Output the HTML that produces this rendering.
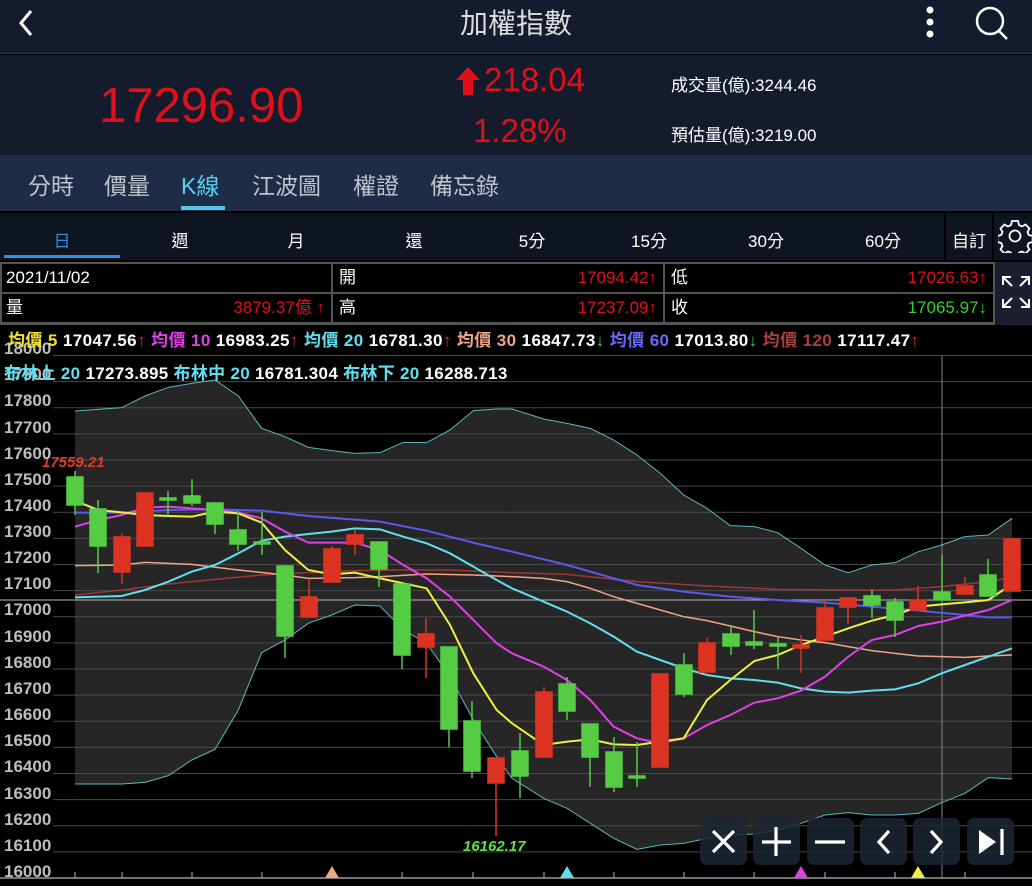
<!DOCTYPE html>
<html><head><meta charset="utf-8">
<style>
*{margin:0;padding:0;box-sizing:border-box}
body{width:1032px;height:886px;background:#000;position:relative;overflow:hidden;font-family:"Liberation Sans","Noto Sans CJK TC",sans-serif;color:#fff}
.a{position:absolute;white-space:nowrap}
#top{position:absolute;left:0;top:0;width:1032px;height:54px;background:#131b2c;border-bottom:1px solid #2a3448}
#quote{position:absolute;left:0;top:55px;width:1032px;height:100px;background:#131b2c}
#tabs{position:absolute;left:0;top:155px;width:1032px;height:56px;background:#1f2c47}
#per{position:absolute;left:0;top:211px;width:1032px;height:51px;background:#0f1520;border-top:2px solid #000;border-bottom:2px solid #000}
.tab{font-size:23px;color:#c0c4cc;top:167px}
.p{font-size:17px;top:227px;transform:translateX(-50%)}
.cell{position:absolute;background:#000;height:28px;font-size:17px;line-height:28px}
.lg{font-size:17px;font-weight:bold;top:326px}
.btn{position:absolute;top:818px;width:47px;height:47px;border-radius:7px;background:rgba(28,38,52,0.85)}
.yl{position:absolute;left:4px;font-size:17px;font-weight:bold;color:#bdbdbd}
</style></head><body>

<svg class="a" style="left:0;top:0" width="1032" height="886" viewBox="0 0 1032 886">
 <g transform="translate(0,380) scale(0.33333)">
  <polygon fill="#262626" points="225,93 365,83 435,48 505,22 575,10 645,0 715,48 785,145 855,170 925,202 995,212 1065,220 1140,218 1210,187 1280,188 1350,150 1420,92 1490,87 1536,87 1536,1195 1490,1130 1420,1020 1350,890 1280,790 1210,750 1140,678 1065,675 995,705 925,730 855,780 785,818 715,990 645,1108 575,1140 505,1187 435,1207 365,1212 225,1212"/>
 </g>
 <g transform="translate(512,380) scale(0.33333)">
  <polygon fill="#262626" points="0,87 95,117 165,130 235,145 305,180 375,225 445,280 515,345 585,385 655,437 727,440 797,458 867,505 939,555 1009,578 1079,555 1149,548 1219,515 1289,495 1359,470 1429,465 1500,415 1500,1197 1429,1193 1359,1240 1289,1268 1219,1300 1149,1305 1079,1305 1009,1298 939,1305 867,1330 797,1350 727,1362 655,1365 585,1375 515,1390 445,1395 375,1408 305,1375 235,1330 165,1285 95,1255 0,1195"/>
 </g>
 <g stroke="#4a4a4a" stroke-width="1">
  <line x1="53" x2="1032" y1="355.5" y2="355.5"/><line x1="53" x2="1032" y1="381.6" y2="381.6"/><line x1="53" x2="1032" y1="407.7" y2="407.7"/><line x1="53" x2="1032" y1="433.9" y2="433.9"/><line x1="53" x2="1032" y1="460" y2="460"/><line x1="53" x2="1032" y1="486.1" y2="486.1"/><line x1="53" x2="1032" y1="512.2" y2="512.2"/><line x1="53" x2="1032" y1="538.4" y2="538.4"/><line x1="53" x2="1032" y1="564.5" y2="564.5"/><line x1="53" x2="1032" y1="590.6" y2="590.6"/><line x1="53" x2="1032" y1="616.7" y2="616.7"/><line x1="53" x2="1032" y1="642.9" y2="642.9"/><line x1="53" x2="1032" y1="669" y2="669"/><line x1="53" x2="1032" y1="695.1" y2="695.1"/><line x1="53" x2="1032" y1="721.2" y2="721.2"/><line x1="53" x2="1032" y1="747.4" y2="747.4"/><line x1="53" x2="1032" y1="773.5" y2="773.5"/><line x1="53" x2="1032" y1="799.6" y2="799.6"/><line x1="53" x2="1032" y1="825.7" y2="825.7"/><line x1="53" x2="1032" y1="851.9" y2="851.9"/>
 </g>
 <line x1="0" x2="1032" y1="878" y2="878" stroke="#999" stroke-width="1.5"/>
 <g stroke="#999" stroke-width="1.2">
  <line x1="75" x2="75" y1="872" y2="878"/><line x1="122" x2="122" y1="872" y2="878"/><line x1="192" x2="192" y1="872" y2="878"/><line x1="262" x2="262" y1="872" y2="878"/><line x1="402" x2="402" y1="872" y2="878"/><line x1="473" x2="473" y1="872" y2="878"/><line x1="544" x2="544" y1="872" y2="878"/><line x1="614" x2="614" y1="872" y2="878"/><line x1="684" x2="684" y1="872" y2="878"/><line x1="754" x2="754" y1="872" y2="878"/><line x1="825" x2="825" y1="872" y2="878"/><line x1="895" x2="895" y1="872" y2="878"/><line x1="965" x2="965" y1="872" y2="878"/>
 </g>
 <line x1="0" x2="1032" y1="600" y2="600" stroke="#bbb" stroke-width="1"/>
 <line x1="942" x2="942" y1="356" y2="878" stroke="#888" stroke-width="1"/>
 <g fill="none" transform="translate(0,380) scale(0.33333)">
  <polyline vector-effect="non-scaling-stroke" stroke="#5ab8c0" stroke-width="1" points="225,93 365,83 435,48 505,22 575,10 645,0 715,48 785,145 855,170 925,202 995,212 1065,220 1140,218 1210,187 1280,188 1350,150 1420,92 1490,87 1536,87"/>
  <polyline vector-effect="non-scaling-stroke" stroke="#5ab8c0" stroke-width="1" points="225,1212 365,1212 435,1207 505,1187 575,1140 645,1108 715,990 785,818 855,780 925,730 995,705 1065,675 1140,678 1210,750 1280,790 1350,890 1420,1020 1490,1130 1536,1195"/>
  <polyline vector-effect="non-scaling-stroke" stroke="#a03535" stroke-width="1.5" points="225,645 365,630 505,612 645,598 785,585 925,578 1065,572 1210,570 1350,570 1536,578"/>
  <polyline vector-effect="non-scaling-stroke" stroke="#f0a585" stroke-width="1.5" points="225,557 365,555 435,547 575,553 715,570 855,585 925,595 1065,593 1140,590 1280,582 1420,585 1536,590"/>
  <polyline vector-effect="non-scaling-stroke" stroke="#5a5af0" stroke-width="2" points="225,398 365,398 505,390 645,388 785,392 925,408 1140,425 1280,452 1420,488 1536,515"/>
  <polyline vector-effect="non-scaling-stroke" stroke="#60e0ee" stroke-width="2" points="225,652 365,648 435,630 505,605 575,575 645,555 715,520 785,482 855,470 925,462 995,455 1065,445 1140,448 1210,470 1280,490 1350,520 1420,560 1490,600 1536,625"/>
  <polyline vector-effect="non-scaling-stroke" stroke="#e040e8" stroke-width="2" points="225,440 295,420 365,405 435,383 505,380 575,385 645,390 715,398 785,415 855,455 925,488 995,488 1065,488 1140,510 1210,555 1280,595 1350,650 1420,720 1490,790 1536,820"/>
  <polyline vector-effect="non-scaling-stroke" stroke="#f0f040" stroke-width="2" points="225,362 295,390 365,397 435,405 505,408 575,410 645,395 715,400 785,428 855,510 925,570 995,583 1065,578 1140,595 1210,610 1280,625 1350,735 1420,880 1490,990 1536,1030"/>
 </g>
 <g fill="none" transform="translate(512,380) scale(0.33333)">
  <polyline vector-effect="non-scaling-stroke" stroke="#5ab8c0" stroke-width="1" points="0,87 95,117 165,130 235,145 305,180 375,225 445,280 515,345 585,385 655,437 727,440 797,458 867,505 939,555 1009,578 1079,555 1149,548 1219,515 1289,495 1359,470 1429,465 1500,415"/>
  <polyline vector-effect="non-scaling-stroke" stroke="#5ab8c0" stroke-width="1" points="0,1195 95,1255 165,1285 235,1330 305,1375 375,1408 445,1395 515,1390 585,1375 655,1365 727,1362 797,1350 867,1330 939,1305 1009,1298 1079,1305 1149,1305 1219,1300 1289,1268 1359,1240 1429,1193 1500,1197"/>
  <polyline vector-effect="non-scaling-stroke" stroke="#a03535" stroke-width="1.5" points="0,578 165,583 375,605 585,618 797,628 1009,630 1149,630 1289,620 1429,605 1500,592"/>
  <polyline vector-effect="non-scaling-stroke" stroke="#f0a585" stroke-width="1.5" points="0,590 95,595 165,605 235,625 305,650 375,670 445,690 515,710 585,722 655,738 727,755 797,770 867,780 939,788 1009,800 1079,812 1149,820 1219,828 1289,830 1359,832 1429,828 1500,825"/>
  <polyline vector-effect="non-scaling-stroke" stroke="#5a5af0" stroke-width="2" points="0,515 165,555 305,595 375,615 515,635 655,650 797,660 939,668 1079,680 1219,692 1359,705 1429,712 1500,712"/>
  <polyline vector-effect="non-scaling-stroke" stroke="#60e0ee" stroke-width="2" points="0,625 95,665 165,695 235,730 305,770 375,815 445,840 515,865 585,885 655,895 727,900 797,908 867,925 939,935 1009,938 1079,932 1149,928 1219,910 1289,880 1359,855 1429,830 1500,805"/>
  <polyline vector-effect="non-scaling-stroke" stroke="#e040e8" stroke-width="2" points="0,820 95,860 165,900 235,960 305,1040 375,1075 445,1090 515,1075 585,1035 655,1005 727,968 797,955 867,932 939,890 1009,830 1079,780 1149,765 1219,738 1289,725 1359,707 1429,690 1500,660"/>
  <polyline vector-effect="non-scaling-stroke" stroke="#f0f040" stroke-width="2" points="0,1030 95,1095 165,1085 235,1078 305,1093 375,1095 445,1085 515,1075 585,960 655,900 727,843 797,825 867,795 939,770 1009,745 1079,722 1149,705 1219,680 1289,673 1359,667 1429,660 1500,612"/>
 </g>
 <g stroke="#55cc44" stroke-width="1.5" fill="#55cc44">
  <line x1="75" x2="75" y1="471" y2="515"/><rect x="67" y="477" width="16" height="28"/>
  <line x1="98" x2="98" y1="500" y2="573"/><rect x="90" y="509" width="16" height="37"/>
  <line x1="168" x2="168" y1="491" y2="516"/><rect x="160" y="498" width="16" height="2"/>
  <line x1="192" x2="192" y1="479" y2="506"/><rect x="184" y="496" width="16" height="7"/>
  <line x1="215" x2="215" y1="502" y2="534"/><rect x="207" y="503" width="16" height="21"/>
  <line x1="238" x2="238" y1="511" y2="551"/><rect x="230" y="530" width="16" height="14"/>
  <line x1="262" x2="262" y1="512" y2="555"/><rect x="254" y="542" width="16" height="2"/>
  <line x1="285" x2="285" y1="566" y2="658"/><rect x="277" y="566" width="16" height="70"/>
  <line x1="379" x2="379" y1="542" y2="587"/><rect x="371" y="542" width="16" height="27"/>
  <line x1="402" x2="402" y1="584" y2="669"/><rect x="394" y="584" width="16" height="71"/>
  <line x1="449" x2="449" y1="647" y2="747"/><rect x="441" y="647" width="16" height="82"/>
  <line x1="472" x2="472" y1="701" y2="778"/><rect x="464" y="721" width="16" height="50"/>
  <line x1="520" x2="520" y1="733" y2="798"/><rect x="512" y="751" width="16" height="25"/>
  <line x1="567" x2="567" y1="677" y2="720"/><rect x="559" y="684" width="16" height="27"/>
  <line x1="590" x2="590" y1="724" y2="787"/><rect x="582" y="724" width="16" height="33"/>
  <line x1="614" x2="614" y1="737" y2="792"/><rect x="606" y="752" width="16" height="35"/>
  <line x1="637" x2="637" y1="742" y2="787"/><rect x="629" y="776" width="16" height="2"/>
  <line x1="684" x2="684" y1="653" y2="697"/><rect x="676" y="665" width="16" height="29"/>
  <line x1="731" x2="731" y1="625" y2="655"/><rect x="723" y="634" width="16" height="12"/>
  <line x1="754" x2="754" y1="610" y2="649"/><rect x="746" y="642" width="16" height="3"/>
  <line x1="778" x2="778" y1="637" y2="669"/><rect x="770" y="644" width="16" height="2"/>
  <line x1="872" x2="872" y1="590" y2="618"/><rect x="864" y="596" width="16" height="9"/>
  <line x1="895" x2="895" y1="598" y2="637"/><rect x="887" y="602" width="16" height="18"/>
  <line x1="942" x2="942" y1="555" y2="600"/><rect x="934" y="592" width="16" height="8"/>
  <line x1="988" x2="988" y1="559" y2="596"/><rect x="980" y="575" width="16" height="21"/>
 </g>
 <g stroke="#dd3322" stroke-width="1.5" fill="#dd3322">
  <line x1="122" x2="122" y1="534" y2="584"/><rect x="114" y="537" width="16" height="35"/>
  <rect x="137" y="493" width="16" height="53"/>
  <line x1="309" x2="309" y1="579" y2="617"/><rect x="301" y="597" width="16" height="20"/>
  <line x1="332" x2="332" y1="546" y2="582"/><rect x="324" y="549" width="16" height="33"/>
  <line x1="355" x2="355" y1="530" y2="555"/><rect x="347" y="535" width="16" height="9"/>
  <line x1="426" x2="426" y1="618" y2="678"/><rect x="418" y="634" width="16" height="13"/>
  <line x1="496" x2="496" y1="758" y2="836"/><rect x="488" y="758" width="16" height="25"/>
  <line x1="544" x2="544" y1="687" y2="757"/><rect x="536" y="692" width="16" height="65"/>
  <rect x="652" y="674" width="16" height="93"/>
  <line x1="707" x2="707" y1="638" y2="672"/><rect x="699" y="643" width="16" height="29"/>
  <line x1="801" x2="801" y1="635" y2="673"/><rect x="793" y="645" width="16" height="3"/>
  <line x1="825" x2="825" y1="600" y2="640"/><rect x="817" y="608" width="16" height="32"/>
  <line x1="848" x2="848" y1="597" y2="624"/><rect x="840" y="598" width="16" height="9"/>
  <line x1="918" x2="918" y1="586" y2="610"/><rect x="910" y="600" width="16" height="10"/>
  <line x1="965" x2="965" y1="577" y2="594"/><rect x="957" y="586" width="16" height="8"/>
  <rect x="1004" y="539" width="16" height="52"/>
 </g>
 <polygon points="325,878 332,866 339,878" fill="#f0a585"/>
 <polygon points="560,878 567,866 574,878" fill="#60e0ee"/>
 <polygon points="794,878 801,866 808,878" fill="#e040e8"/>
 <polygon points="911,878 918,866 925,878" fill="#f0f040"/>
 <text x="42" y="467" fill="#e03a2a" font-size="15" font-weight="bold" font-style="italic" font-family="Liberation Sans">17559.21</text>
 <text x="463" y="851" fill="#66e044" font-size="15" font-weight="bold" font-style="italic" font-family="Liberation Sans">16162.17</text>
</svg>

<div class="yl" style="top:339px">18000</div>
<div class="yl" style="top:365px">17900</div>
<div class="yl" style="top:391px">17800</div>
<div class="yl" style="top:418px">17700</div>
<div class="yl" style="top:444px">17600</div>
<div class="yl" style="top:470px">17500</div>
<div class="yl" style="top:496px">17400</div>
<div class="yl" style="top:522px">17300</div>
<div class="yl" style="top:548px">17200</div>
<div class="yl" style="top:574px">17100</div>
<div class="yl" style="top:600px">17000</div>
<div class="yl" style="top:627px">16900</div>
<div class="yl" style="top:653px">16800</div>
<div class="yl" style="top:679px">16700</div>
<div class="yl" style="top:705px">16600</div>
<div class="yl" style="top:731px">16500</div>
<div class="yl" style="top:757px">16400</div>
<div class="yl" style="top:784px">16300</div>
<div class="yl" style="top:810px">16200</div>
<div class="yl" style="top:836px">16100</div>
<div class="yl" style="top:862px">16000</div>

<div class="a lg" style="left:8px;letter-spacing:0.4px"><span style="color:#f0e030">均價 5</span> 17047.56<span style="color:#e03030">↑</span> <span style="color:#e040e8">均價 10</span> 16983.25<span style="color:#e03030">↑</span> <span style="color:#60e0ee">均價 20</span> 16781.30<span style="color:#e03030">↑</span> <span style="color:#f0a585">均價 30</span> 16847.73<span style="color:#40d040">↓</span> <span style="color:#6a6af8">均價 60</span> 17013.80<span style="color:#40d040">↓</span> <span style="color:#a84040">均價 120</span> 17117.47<span style="color:#e03030">↑</span></div>
<div class="a lg" style="left:4px;top:359px;letter-spacing:0.3px"><span style="color:#60e0ee">布林上 20</span> 17273.895 <span style="color:#60e0ee">布林中 20</span> 16781.304 <span style="color:#60e0ee">布林下 20</span> 16288.713</div>

<div id="top"></div>
<svg class="a" style="left:16px;top:8px" width="22" height="30"><polyline points="15,3 5,15 15,27" fill="none" stroke="#fff" stroke-width="3"/></svg>
<div class="a" style="left:0;width:1032px;text-align:center;top:2px;font-size:28px;color:#ddd">加權指數</div>
<svg class="a" style="left:920px;top:4px" width="20" height="36"><circle cx="10" cy="6" r="3.5" fill="#fff"/><circle cx="10" cy="18" r="3.5" fill="#fff"/><circle cx="10" cy="30" r="3.5" fill="#fff"/></svg>
<svg class="a" style="left:972px;top:4px" width="40" height="40"><circle cx="18" cy="17" r="13" fill="none" stroke="#fff" stroke-width="2.5"/><line x1="27" y1="27" x2="35" y2="35" stroke="#fff" stroke-width="2.5"/></svg>

<div id="quote"></div>
<div class="a" style="left:99px;top:78px;font-size:49px;color:#e0101a">17296.90</div>
<svg class="a" style="left:455px;top:66px" width="26" height="30"><polygon points="13,1 25,14 18,14 18,29 8,29 8,14 1,14" fill="#e0101a"/></svg>
<div class="a" style="left:484px;top:61px;font-size:33px;color:#e0101a">218.04</div>
<div class="a" style="left:473px;top:112px;font-size:33px;color:#e0101a">1.28%</div>
<div class="a" style="left:671px;top:71px;font-size:17px;color:#fff">成交量(億):3244.46</div>
<div class="a" style="left:671px;top:121px;font-size:17px;color:#fff">預估量(億):3219.00</div>

<div id="tabs"></div>
<div class="a tab" style="left:28px">分時</div>
<div class="a tab" style="left:104px">價量</div>
<div class="a tab" style="left:181px;color:#55d0f0">K線</div>
<div class="a" style="left:181px;top:206px;width:44px;height:4px;background:#55c8e8"></div>
<div class="a tab" style="left:252px">江波圖</div>
<div class="a tab" style="left:353px">權證</div>
<div class="a tab" style="left:430px">備忘錄</div>

<div id="per"></div>
<div class="a p" style="left:62px;color:#2a90e8">日</div>
<div class="a" style="left:4px;top:255px;width:116px;height:3px;background:#2a90e8"></div>
<div class="a p" style="left:180px">週</div>
<div class="a p" style="left:296px">月</div>
<div class="a p" style="left:414px">還</div>
<div class="a p" style="left:532px">5分</div>
<div class="a p" style="left:649px">15分</div>
<div class="a p" style="left:766px">30分</div>
<div class="a p" style="left:883px">60分</div>
<div class="a" style="left:944px;top:213px;width:2px;height:47px;background:#000"></div>
<div class="a" style="left:992px;top:213px;width:2px;height:47px;background:#000"></div>
<div class="a p" style="left:969px">自訂</div>
<svg class="a" style="left:998px;top:219px" width="34" height="34" viewBox="0 0 34 34"><path d="M14,2h6l1,4 3,1.5 3.5-2 4,4-2,3.5 1.2,3 4,1v6l-4,1-1.2,3 2,3.5-4,4-3.5-2-3,1.2-1,4h-6l-1-4-3-1.2-3.5,2-4-4 2-3.5-1.2-3-4-1v-6l4-1 1.2-3-2-3.5 4-4 3.5,2 3-1.5z" fill="none" stroke="#fff" stroke-width="1.8"/><circle cx="17" cy="17" r="5.5" fill="none" stroke="#fff" stroke-width="1.8"/></svg>

<div class="a" style="left:0;top:262px;width:995px;height:63px;background:#555"></div>
<div class="cell" style="left:2px;top:264px;width:329px;padding-left:4px">2021/11/02</div>
<div class="cell" style="left:333px;top:264px;width:330px;padding:0 6px"><span>開</span><span style="float:right;color:#e0101a">17094.42↑</span></div>
<div class="cell" style="left:665px;top:264px;width:328px;padding:0 6px"><span>低</span><span style="float:right;color:#e0101a">17026.63↑</span></div>
<div class="cell" style="left:2px;top:294px;width:329px;padding:0 6px 0 4px"><span>量</span><span style="float:right;color:#e0101a">3879.37億 ↑</span></div>
<div class="cell" style="left:333px;top:294px;width:330px;padding:0 6px"><span>高</span><span style="float:right;color:#e0101a">17237.09↑</span></div>
<div class="cell" style="left:665px;top:294px;width:328px;padding:0 6px"><span>收</span><span style="float:right;color:#30d030">17065.97↓</span></div>
<div class="a" style="left:995px;top:262px;width:37px;height:63px;background:#1a2030"></div>
<svg class="a" style="left:1000px;top:274px" width="32" height="36" viewBox="0 0 32 36" stroke="#fff" stroke-width="2" fill="none"><path d="M3,11V3h8M3,3l9,9M29,11V3h-8M29,3l-9,9M3,25v8h8M3,33l9-9M29,25v8h-8M29,33l-9-9"/></svg>

<div class="btn" style="left:700px"></div>
<div class="btn" style="left:753px"></div>
<div class="btn" style="left:807px"></div>
<div class="btn" style="left:860px"></div>
<div class="btn" style="left:913px"></div>
<div class="btn" style="left:967px"></div>
<svg class="a" style="left:700px;top:818px" width="320" height="47" stroke="#fff" stroke-width="3.2" fill="none">
 <path d="M13,13l21,21M34,13l-21,21"/>
 <path d="M76,9v29M62,24h29"/>
 <path d="M115,24h30"/>
 <path d="M189,13l-10,11 10,11"/>
 <path d="M231,13l10,11-10,11"/>
 <polygon points="279,12 279,36 296,24" fill="#fff" stroke="none"/>
 <path d="M302,11v26"/>
</svg>
</body></html>
